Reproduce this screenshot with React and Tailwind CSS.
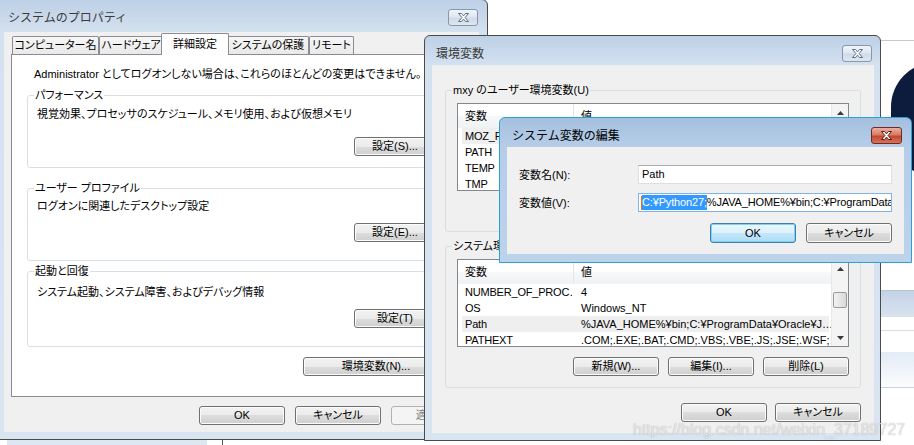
import React from 'react';

const jp = "font-['Liberation_Sans','Noto_Sans_CJK_JP',sans-serif] [font-feature-settings:'palt']";
const title = "font-['Noto_Sans_CJK_JP',sans-serif] text-[12px] leading-[16px] [font-feature-settings:normal]";

function CloseBtn({ active, className = '' }) {
  const skin = active
    ? 'border-[#6e2a22] bg-[linear-gradient(#eab0a2,#d97a66_45%,#c4482f_55%,#d5735a)]'
    : 'border-[#8797ad] bg-[linear-gradient(#f1f5fa,#dfe7f1_45%,#d0dbe8_55%,#dee7f1)]';
  return (
    <div className={`shrink-0 flex items-center justify-center rounded-[3px] border ${skin} ${className}`}>
      <svg width="13" height="11" viewBox="0 0 13 11">
        <path
          d="M1.5 1.5h3l2 2.4 2-2.4h3l-3.4 4 3.4 4h-3l-2-2.4-2 2.4h-3l3.4-4z"
          fill="#fff"
          stroke={active ? '#5a1b14' : '#5d6f88'}
          strokeWidth="1"
          strokeLinejoin="round"
        />
      </svg>
    </div>
  );
}

function Btn({ children, w = 'w-[86px]', h = 'h-[19px]', def, disabled, className = '' }) {
  const skin = disabled
    ? 'border-[#adb2b5] bg-[#f4f4f4] text-[#838383]'
    : def
      ? 'border-[#3c7fb1] bg-[linear-gradient(#ecf7fd,#dcf1fc_50%,#c3e7fc_50%,#aedcf6)] text-black shadow-[inset_0_0_0_1px_#7fd1f5]'
      : 'border-[#707070] bg-[linear-gradient(#f2f2f2,#ebebeb_50%,#dddddd_50%,#cfcfcf)] text-black shadow-[inset_0_0_0_1px_#fcfcfc]';
  return (
    <button type="button" className={`${w} ${h} shrink-0 rounded-[3px] border flex items-center justify-center whitespace-nowrap text-[11px] leading-none ${jp} ${skin} ${className}`}>
      {children}
    </button>
  );
}

function GroupBox({ label, bg = 'bg-white', className = '', children }) {
  return (
    <div className={`relative shrink-0 rounded-[3px] border border-[#d5dfe5] flex flex-col ${className}`}>
      <span className={`absolute top-[-9px] left-[6px] px-[1px] leading-[16px] whitespace-nowrap ${bg}`}>{label}</span>
      {children}
    </div>
  );
}

function Tab({ children, w, selected }) {
  if (selected) {
    return (
      <div className={`${w} h-[22px] -mx-[2px] -mb-[1px] relative z-10 rounded-t-[2px] border border-b-0 border-[#898c95] bg-white flex items-center justify-center pb-[1px] whitespace-nowrap`}>
        {children}
      </div>
    );
  }
  return (
    <div className={`${w} h-[18px] shrink-0 rounded-t-[2px] border border-b-0 border-[#898c95] bg-[linear-gradient(#f6f6f6,#e9e9e9)] flex items-center justify-center whitespace-nowrap`}>
      {children}
    </div>
  );
}

function Scrollbar({ thumbTop }) {
  return (
    <div className="w-[17px] shrink-0 relative bg-[#f4f4f4] border-l border-[#e8e8e8]">
      <div className="h-[17px] flex items-center justify-center">
        <svg width="7" height="4" viewBox="0 0 7 4"><path d="M0 4L3.5 0L7 4z" fill="#3a3a3a" /></svg>
      </div>
      {thumbTop != null && (
        <div
          className="absolute left-[1px] w-[14px] h-[16px] rounded-[2px] border border-[#9a9a9a] bg-[linear-gradient(90deg,#f3f3f3,#e6e6e6_50%,#d9d9d9)]"
          style={{ top: thumbTop }}
        />
      )}
      <div className="absolute bottom-0 left-0 right-0 h-[17px] flex items-center justify-center">
        <svg width="7" height="4" viewBox="0 0 7 4"><path d="M0 0L3.5 4L7 0z" fill="#3a3a3a" /></svg>
      </div>
    </div>
  );
}

function ListView({ rows, sel, thumbTop }) {
  return (
    <div className="w-[392px] h-[88px] shrink-0 border border-[#828790] bg-white flex overflow-hidden">
      <div className="flex-1 min-w-0 flex flex-col">
        <div className="h-[24px] shrink-0 flex bg-[linear-gradient(#ffffff,#ffffff_50%,#f7f8fa_50%,#f1f2f4)]">
          <div className="w-[116px] shrink-0 border-r border-[#e5e5e5] pl-[7px] flex items-center">変数</div>
          <div className="flex-1 pl-[7px] flex items-center">値</div>
        </div>
        {rows.map(([k, v], i) => (
          <div key={k} className="h-[16px] shrink-0 flex items-center relative whitespace-nowrap">
            {i === sel && <div className="absolute inset-y-0 left-[4px] right-[2px] bg-[#efefef]" />}
            <div className="relative w-[116px] shrink-0 pl-[7px] overflow-hidden tracking-[-0.2px]">{k}</div>
            <div className="relative flex-1 min-w-0 pl-[7px] pr-[6px] overflow-hidden">{v}</div>
          </div>
        ))}
      </div>
      <Scrollbar thumbTop={thumbTop} />
    </div>
  );
}

function SystemProps() {
  return (
    <div className="absolute left-[-1px] top-[-1px] w-[489px] h-[441px] border border-[#4a4a4a] rounded-tr-[6px] bg-[linear-gradient(#bdd0e6,#d4e1ef_32px,#dae5f2)] flex flex-col">
      <div className="h-[32px] shrink-0 flex items-start">
        <span className={`ml-[8px] mt-[9px] text-[#3a3a3a] ${title}`}>システムのプロパティ</span>
        <CloseBtn className="ml-auto mt-[9px] mr-[9px] w-[30px] h-[17px]" />
      </div>
      <div className="ml-[4px] mr-[8px] h-[400px] bg-[#f0f0f0] flex flex-col pt-[1px] px-[7px]">
        <div className="h-[21px] shrink-0 flex items-end pl-[1px]">
          <Tab w="w-[87px]">コンピューター名</Tab>
          <Tab w="w-[64px]">ハードウェア</Tab>
          <Tab w="w-[68px]" selected>詳細設定</Tab>
          <Tab w="w-[82px]">システムの保護</Tab>
          <Tab w="w-[45px]">リモート</Tab>
        </div>
        <div className="h-[343px] shrink-0 border border-[#898c95] bg-white flex flex-col pl-[15px]">
          <p className="mt-[11px] ml-[7px] leading-[16px] whitespace-nowrap">Administrator としてログオンしない場合は、これらのほとんどの変更はできません。</p>
          <GroupBox label="パフォーマンス" className="mt-[13px] w-[430px] h-[73px] pt-[10px] pl-[9px]">
            <p className="leading-[16px] whitespace-nowrap">視覚効果、プロセッサのスケジュール、メモリ使用、および仮想メモリ</p>
            <Btn w="w-[82px]" className="mt-[15px] ml-[317px]">設定(S)...</Btn>
          </GroupBox>
          <GroupBox label="ユーザー プロファイル" className="mt-[20px] w-[430px] h-[73px] pt-[9px] pl-[9px]">
            <p className="leading-[16px] whitespace-nowrap">ログオンに関連したデスクトップ設定</p>
            <Btn w="w-[82px]" className="mt-[9px] ml-[317px]">設定(E)...</Btn>
          </GroupBox>
          <GroupBox label="起動と回復" className="mt-[10px] w-[430px] h-[76px] pt-[12px] pl-[9px]">
            <p className="leading-[16px] whitespace-nowrap">システム起動、システム障害、およびデバッグ情報</p>
            <Btn w="w-[82px]" className="mt-[9px] ml-[317px]">設定(T)</Btn>
          </GroupBox>
          <Btn w="w-[146px]" className="mt-[10px] ml-[276px]">環境変数(N)...</Btn>
        </div>
        <div className="mt-[9px] flex gap-[10px] pl-[188px]">
          <Btn>OK</Btn>
          <Btn>キャンセル</Btn>
          <Btn disabled>適用(A)</Btn>
        </div>
      </div>
    </div>
  );
}

const userRows = [
  ['MOZ_PLUGIN_PATH', 'C:¥Program Files (x86)¥Foxit Software¥Foxit Reader¥plugins¥'],
  ['PATH', 'C:¥Users¥mxy¥AppData¥Local¥Programs¥Python'],
  ['TEMP', '%USERPROFILE%¥AppData¥Local¥Temp'],
  ['TMP', '%USERPROFILE%¥AppData¥Local¥Temp'],
];

const sysRows = [
  ['NUMBER_OF_PROC…', '4'],
  ['OS', 'Windows_NT'],
  ['Path', '%JAVA_HOME%¥bin;C:¥ProgramData¥Oracle¥J…'],
  ['PATHEXT', '.COM;.EXE;.BAT;.CMD;.VBS;.VBE;.JS;.JSE;.WSF;…'],
];

function EnvVars() {
  return (
    <div className="absolute left-[424px] top-[35px] w-[457px] h-[406px] border border-[#4a4a4a] rounded-t-[6px] bg-[linear-gradient(#bdd0e6,#d4e1ef_29px,#dae5f2)] flex flex-col">
      <div className="h-[29px] shrink-0 flex items-start">
        <span className={`ml-[11px] mt-[9px] text-[#3a3a3a] ${title}`}>環境変数</span>
        <CloseBtn className="ml-auto mt-[9px] mr-[8px] w-[30px] h-[17px]" />
      </div>
      <div className="ml-[7px] mr-[6px] h-[368px] bg-[#f0f0f0] flex flex-col">
        <GroupBox label="mxy のユーザー環境変数(U)" bg="bg-[#f0f0f0]" className="mt-[25px] ml-[13px] w-[416px] h-[142px] pt-[12px] pl-[11px]">
          <ListView rows={userRows} sel={0} thumbTop={30} />
          <div className="mt-[10px] ml-[116px] flex gap-[9px]">
            <Btn>新規(N)...</Btn>
            <Btn>編集(E)...</Btn>
            <Btn>削除(D)</Btn>
          </div>
        </GroupBox>
        <GroupBox label="システム環境変数(S)" bg="bg-[#f0f0f0]" className="mt-[14px] ml-[13px] w-[416px] h-[142px] pt-[12px] pl-[11px]">
          <ListView rows={sysRows} sel={2} thumbTop={32} />
          <div className="mt-[10px] ml-[116px] flex gap-[9px]">
            <Btn>新規(W)...</Btn>
            <Btn>編集(I)...</Btn>
            <Btn>削除(L)</Btn>
          </div>
        </GroupBox>
        <div className="mt-[15px] ml-[249px] flex gap-[8px]">
          <Btn>OK</Btn>
          <Btn>キャンセル</Btn>
        </div>
      </div>
    </div>
  );
}

function EditVar() {
  return (
    <div className="absolute left-[499px] top-[117px] w-[413px] h-[146px] border border-[#2f9fd3] rounded-t-[6px] bg-[linear-gradient(#a4c0df,#b6cde8_29px,#bcd3ec)] flex flex-col">
      <div className="h-[29px] shrink-0 flex items-start">
        <span className={`ml-[12px] mt-[9px] text-black ${title}`}>システム変数の編集</span>
        <CloseBtn active className="ml-auto mt-[9px] mr-[9px] w-[31px] h-[17px]" />
      </div>
      <div className="ml-[7px] mr-[7px] h-[107px] bg-[#f0f0f0] flex flex-col">
        <div className="mt-[18px] flex items-center">
          <span className="ml-[12px] w-[119px] leading-[16px]">変数名(N):</span>
          <div className="w-[254px] h-[19px] border border-[#dbdfe6] border-t-[#abadb3] bg-white flex items-center pl-[3px]">Path</div>
        </div>
        <div className="mt-[9px] flex items-center">
          <span className="ml-[12px] w-[119px] leading-[16px]">変数値(V):</span>
          <div className="w-[254px] h-[19px] border border-[#7eb4ea] bg-white flex items-center pl-[2px] overflow-hidden whitespace-nowrap tracking-[-0.15px]">
            <span className="w-[1px] h-[14px] bg-[#e07020] shrink-0" />
            <span className="bg-[#3399ff] text-white leading-[15px]">C:¥Python27;</span>
            <span className="leading-[15px]">%JAVA_HOME%¥bin;C:¥ProgramData¥Oracle¥Java¥javapath</span>
          </div>
        </div>
        <div className="mt-[11px] flex justify-end gap-[10px] pr-[12px]">
          <Btn def h="h-[20px]">OK</Btn>
          <Btn h="h-[20px]">キャンセル</Btn>
        </div>
      </div>
    </div>
  );
}

export default function App() {
  return (
    <div className={`relative w-[914px] h-[445px] overflow-hidden bg-white text-[11px] text-black ${jp}`}>
      {/* desktop behind the dialogs */}
      <div className="absolute left-[876px] top-[40px] w-[40px] h-[1px] bg-[#c9c9c9]" />
      <div className="absolute left-[891px] top-[62px] w-[90px] h-[115px] rounded-full bg-[#0d1b3d]" />
      <div className="absolute left-[876px] top-[290px] w-[40px] h-[1px] bg-[#b9c3cf]" />
      <div className="absolute left-[876px] top-[291px] w-[40px] h-[26px] bg-[linear-gradient(#c3d3e6,#d8e3ef)]" />
      <div className="absolute left-[876px] top-[330px] w-[40px] h-[1px] bg-[#d6dde6]" />
      <div className="absolute left-[876px] top-[352px] w-[40px] h-[35px] bg-[linear-gradient(#e3ebf5,#fbfcfe)]" />
      <div className="absolute left-[876px] top-[387px] w-[40px] h-[1px] bg-[#c9d3de]" />
      <div className="absolute left-[7px] top-[440px] w-[200px] h-[5px] bg-[#dce7f3]" />
      <div className="absolute left-[222px] top-[440px] w-[1px] h-[5px] bg-[#555]" />

      <SystemProps />
      <EnvVars />
      <EditVar />

      <div className="absolute left-[633px] top-[420px] font-['Liberation_Sans',sans-serif] text-[16px] leading-[20px] text-white/70 [text-shadow:0_0_1px_rgba(0,0,0,0.35)] [font-feature-settings:normal]">
        https://blog.csdn.net/weixin_37189727
      </div>
    </div>
  );
}
